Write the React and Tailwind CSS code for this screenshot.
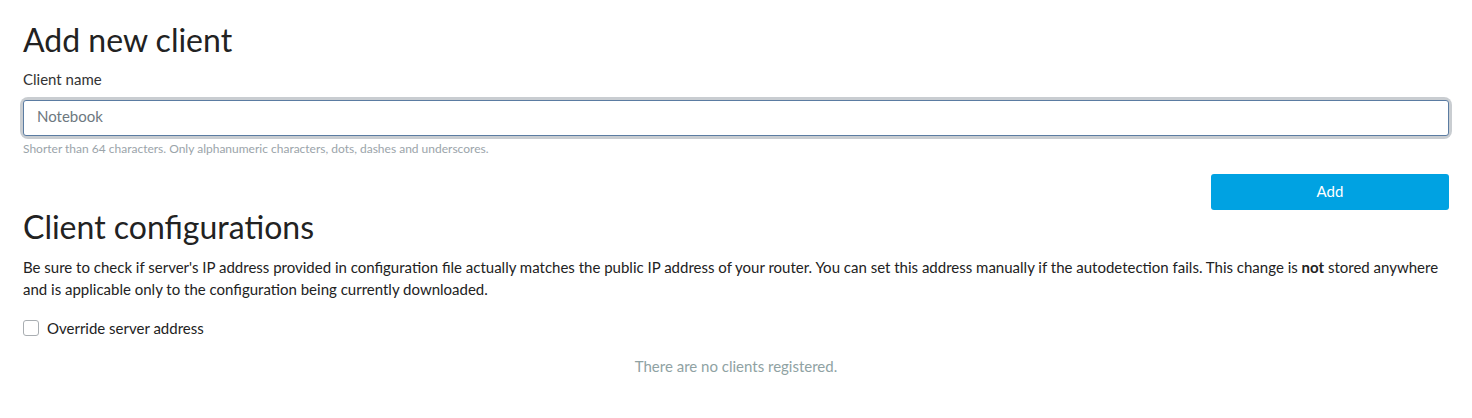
export default function App() {
  return (
    <div className="bg-white px-[23px] pt-[20px] font-['Lato',sans-serif] text-[#222]">
      <h1 className="text-[32px] leading-[40px] font-normal">Add new client</h1>
      <label className="mt-[9px] block text-[15px] leading-[20px] text-[#333]">Client name</label>
      <div className="mt-[11px] rounded-[5px] ring-[3px] ring-[#c9cdd1]">
        <input
          className="block h-[36px] w-full rounded-[3px] border border-[#5b7ca2] bg-white px-[13px] pb-[4px] text-[15px] text-[#6d7880] outline-none"
          defaultValue="Notebook"
        />
      </div>
      <p className="mt-[5px] text-[12px] leading-[16px] text-[#9ba4aa]">
        Shorter than 64 characters. Only alphanumeric characters, dots, dashes and underscores.
      </p>
      <div className="mt-[17px] flex justify-end">
        <button className="h-[36px] w-[238px] rounded-[3px] bg-[#00a2e2] pb-[2px] text-[15px] text-white">Add</button>
      </div>
      <h2 className="mt-[-3px] text-[32px] leading-[40px] font-normal">Client configurations</h2>
      <p className="mt-[9px] text-[15px] leading-[22px] text-[#222]">
        Be sure to check if server's IP address provided in configuration file actually matches the public IP address of your router. You can set this address manually if the autodetection fails. This change is <b className="font-bold">not</b> stored anywhere and is applicable only to the configuration being currently downloaded.
      </p>
      <label className="mt-[18px] flex items-center gap-[8px] text-[15px] leading-[20px] text-[#222]">
        <span className="h-[16px] w-[16px] rounded-[3px] border border-[#a9aeb2] bg-white" />
        Override server address
      </label>
      <p className="mt-[18px] pb-[40px] text-center text-[15px] leading-[20px] text-[#8fa2a3]">
        There are no clients registered.
      </p>
    </div>
  );
}
